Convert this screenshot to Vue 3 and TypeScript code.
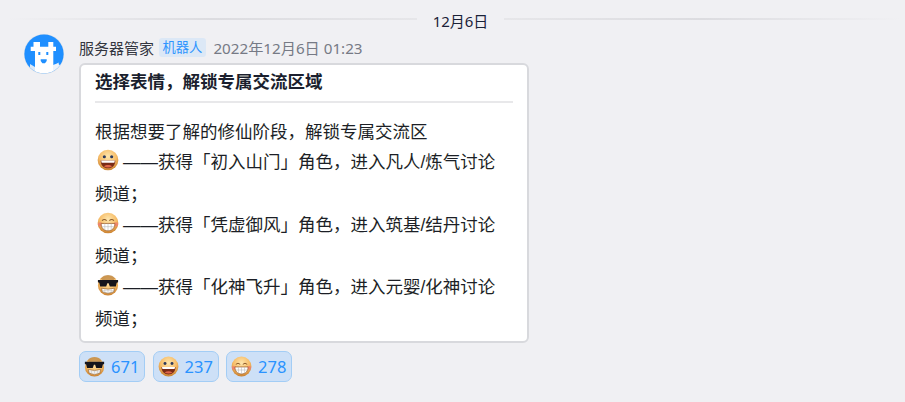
<script setup lang="ts">
type Face = 'grin' | 'smile' | 'cool'
const lines: { face: Face; text: string }[] = [
  { face: 'grin', text: '——获得「初入山门」角色\uFF0C进入凡人/炼气讨论频道\uFF1B' },
  { face: 'smile', text: '——获得「凭虚御风」角色\uFF0C进入筑基/结丹讨论频道\uFF1B' },
  { face: 'cool', text: '——获得「化神飞升」角色\uFF0C进入元婴/化神讨论频道\uFF1B' },
]
const reactions: { face: Face; count: number }[] = [
  { face: 'cool', count: 671 },
  { face: 'grin', count: 237 },
  { face: 'smile', count: 278 },
]
const title = '选择表情\uFF0C解锁专属交流区域'
const intro = '根据想要了解的修仙阶段\uFF0C解锁专属交流区'
</script>

<template>
  <div class="page">
    <svg class="defs" width="0" height="0" aria-hidden="true">
      <defs>
        <radialGradient id="skin" cx="50%" cy="32%" r="68%">
          <stop offset="0" stop-color="#fde6ae" />
          <stop offset="0.6" stop-color="#f7bd68" />
          <stop offset="1" stop-color="#c97f2e" />
        </radialGradient>
        <symbol id="face-grin" viewBox="0 0 24 24">
          <circle cx="12" cy="12" r="11.300" fill="url(#skin)" />
          <circle cx="8" cy="8.500" r="1.700" fill="#2d3a5c" />
          <circle cx="16" cy="8.500" r="1.700" fill="#2d3a5c" />
          <path d="M4 12.500h16c0 5.500-3.500 8.500-8 8.500s-8-3-8-8.500z" fill="#7a2b16" />
          <path d="M4.500 12.500h15l-.6 2.400H5.100z" fill="#fff" />
          <path d="M7.500 18.800c2.500-1.800 6.500-1.800 9 0-2.500 1.700-6.500 1.700-9 0z" fill="#e0664a" />
        </symbol>
        <symbol id="face-smile" viewBox="0 0 24 24">
          <circle cx="12" cy="12" r="11.300" fill="url(#skin)" />
          <ellipse cx="3.500" cy="13.500" rx="2.600" ry="2.200" fill="#ee7f70" opacity="0.85" />
          <ellipse cx="20.500" cy="13.500" rx="2.600" ry="2.200" fill="#ee7f70" opacity="0.85" />
          <path d="M5.500 9.500q2.500-2.500 5 0M13.500 9.500q2.500-2.500 5 0" fill="none" stroke="#8a5a2a" stroke-width="1.100" />
          <path d="M4.500 12.500h15c0 5-3 8-7.500 8s-7.500-3-7.500-8z" fill="#fff" stroke="#9a5a25" stroke-width="0.800" />
          <path d="M5.500 16h13M8.500 12.500v7M12 12.500v8M15.500 12.500v7" stroke="#b5b5b5" stroke-width="0.600" />
        </symbol>
        <symbol id="face-cool" viewBox="0 0 24 24">
          <circle cx="12" cy="12.500" r="11" fill="url(#skin)" />
          <path d="M4 5c2-3 5-4 8-4s6 1 8 4l-2 1.500H6z" fill="#b9803c" opacity="0.7" />
          <path d="M1 6.500h22v2.500l-1.500.6-1 4H14l-1.300-3.600h-1.400L10 13.600H3.500l-1-4L1 9z" fill="#15151c" />
          <path d="M5 15.500q7 2 14 0l-.8 4q-6.200 3.200-12.400 0z" fill="#fff" stroke="#8a5a2a" stroke-width="0.700" />
          <path d="M8.500 16v5M12 16.500v5.500M15.500 16v5M5.500 18.200h13" stroke="#b5b5b5" stroke-width="0.500" />
        </symbol>
      </defs>
    </svg>
    <div class="divider">
      <span class="rule rule-left"></span>
      <span class="date">12月6日</span>
      <span class="rule rule-right"></span>
    </div>
    <div class="message">
      <svg class="avatar" viewBox="0 0 40 40">
        <defs>
          <clipPath id="round"><circle cx="20" cy="20" r="19.600" /></clipPath>
        </defs>
        <circle cx="20" cy="20" r="20" fill="#d6dde6" />
        <g clip-path="url(#round)">
          <rect width="40" height="40" fill="#1f8fff" />
          <path d="M9.500 12.700V8H16v4.700h8.300V8h5v4.700H32V17h-2.700v23H11V17H6.700v-4.300z" fill="#fff" />
          <path d="M29 40v-9l4-1.500 1.500-1 .5 2.500 3-1 1 11z" fill="#eef4fb" />
          <path d="M6 30l5 3v7H6z" fill="#dbe9f8" />
          <rect x="14.300" y="18" width="2" height="3" fill="#1f8fff" />
          <rect x="22.300" y="18" width="2" height="3" fill="#1f8fff" />
          <path d="M16.700 25.300h6v1.700l-1.700 2.300h-2.600l-1.700-2.300z" fill="#1f8fff" />
        </g>
      </svg>
      <div class="body">
        <div class="meta">
          <span class="name">服务器管家</span>
          <span class="tag">机器人</span>
          <span class="time">2022年12月6日 01:23</span>
        </div>
        <div class="card">
          <div class="title">{{ title }}</div>
          <div class="content">
            <div>{{ intro }}</div>
            <div v-for="line in lines" :key="line.face" class="line">
              <svg class="emoji"><use :href="'#face-' + line.face" /></svg>{{ line.text }}
            </div>
          </div>
        </div>
        <div class="reactions">
          <div v-for="r in reactions" :key="r.count" class="reaction">
            <svg class="emoji small"><use :href="'#face-' + r.face" /></svg>
            <span class="count">{{ r.count }}</span>
          </div>
        </div>
      </div>
    </div>
  </div>
</template>

<style>
html, body { margin: 0; background: #f0f0f3; }
</style>

<style scoped>
.page {
  width: 905px;
  height: 402px;
  overflow: hidden;
  background: #f0f0f3;
  font-family: "Noto Sans", "Noto Sans CJK SC", sans-serif;
  color: #1b1f2e;
}
.defs { position: absolute; }
.divider {
  display: flex;
  align-items: center;
  height: 21px;
  margin-top: 8px;
  margin-bottom: 5px;
  padding: 0 4px 0 8px;
}
.rule { height: 2px; }
.rule-left { flex: 409 1 0; background: linear-gradient(90deg, #f0f0f3, #dcdce0 50%, #e6e6e9); }
.rule-right { flex: 397 1 0; background: linear-gradient(90deg, #e6e6e9, #dcdce0 50%, #f0f0f3); }
.date { width: 87px; text-align: center; font-size: 15px; line-height: 21px; margin-top: 5px; color: #1b2238; }
.message { display: flex; padding-left: 24px; gap: 15px; }
.avatar { width: 40px; height: 40px; flex: none; }
.body { width: 450px; }
.meta { display: flex; align-items: center; height: 30px; margin: -2px 0 1px; }
.name { font-size: 15px; width: 76px; white-space: nowrap; color: #33363f; }
.tag {
  margin-left: 4px;
  padding: 0 3.500px;
  height: 19px;
  line-height: 19px;
  font-size: 13.300px;
  color: #2f95ff;
  background: #dce8f6;
  border-radius: 3px;
}
.time { margin-left: 7.500px; font-size: 15.200px; color: #767a85; white-space: nowrap; }
.card {
  box-sizing: border-box;
  width: 450px;
  height: 280px;
  background: #fff;
  border: 2px solid #d8d9dd;
  border-radius: 6px;
  padding: 0 14px;
  font-size: 17.500px;
}
.title {
  font-weight: 700;
  height: 36px;
  line-height: 33px;
  border-bottom: 2px solid #e8e8ea;
}
.content { line-height: 31.300px; padding-top: 13px; color: #1c1f26; }
.line { font-family: "Liberation Sans", "Noto Sans CJK SC", sans-serif; padding-right: 4px; }
.emoji { width: 22px; height: 22px; vertical-align: 1px; margin: -4px 4px -4px 2px; }
.emoji.small { width: 21px; height: 21px; vertical-align: 0; margin: 0; }
.reactions { display: flex; gap: 7.500px; margin-top: 8px; }
.reaction {
  box-sizing: border-box;
  display: flex;
  align-items: center;
  gap: 6px;
  width: 66px;
  height: 31px;
  padding: 0 0 0 4px;
  background: #cde0f7;
  border: 1px solid #a3cdf5;
  border-radius: 7px;
}
.count { font-size: 16.500px; color: #2a93ff; }
</style>
